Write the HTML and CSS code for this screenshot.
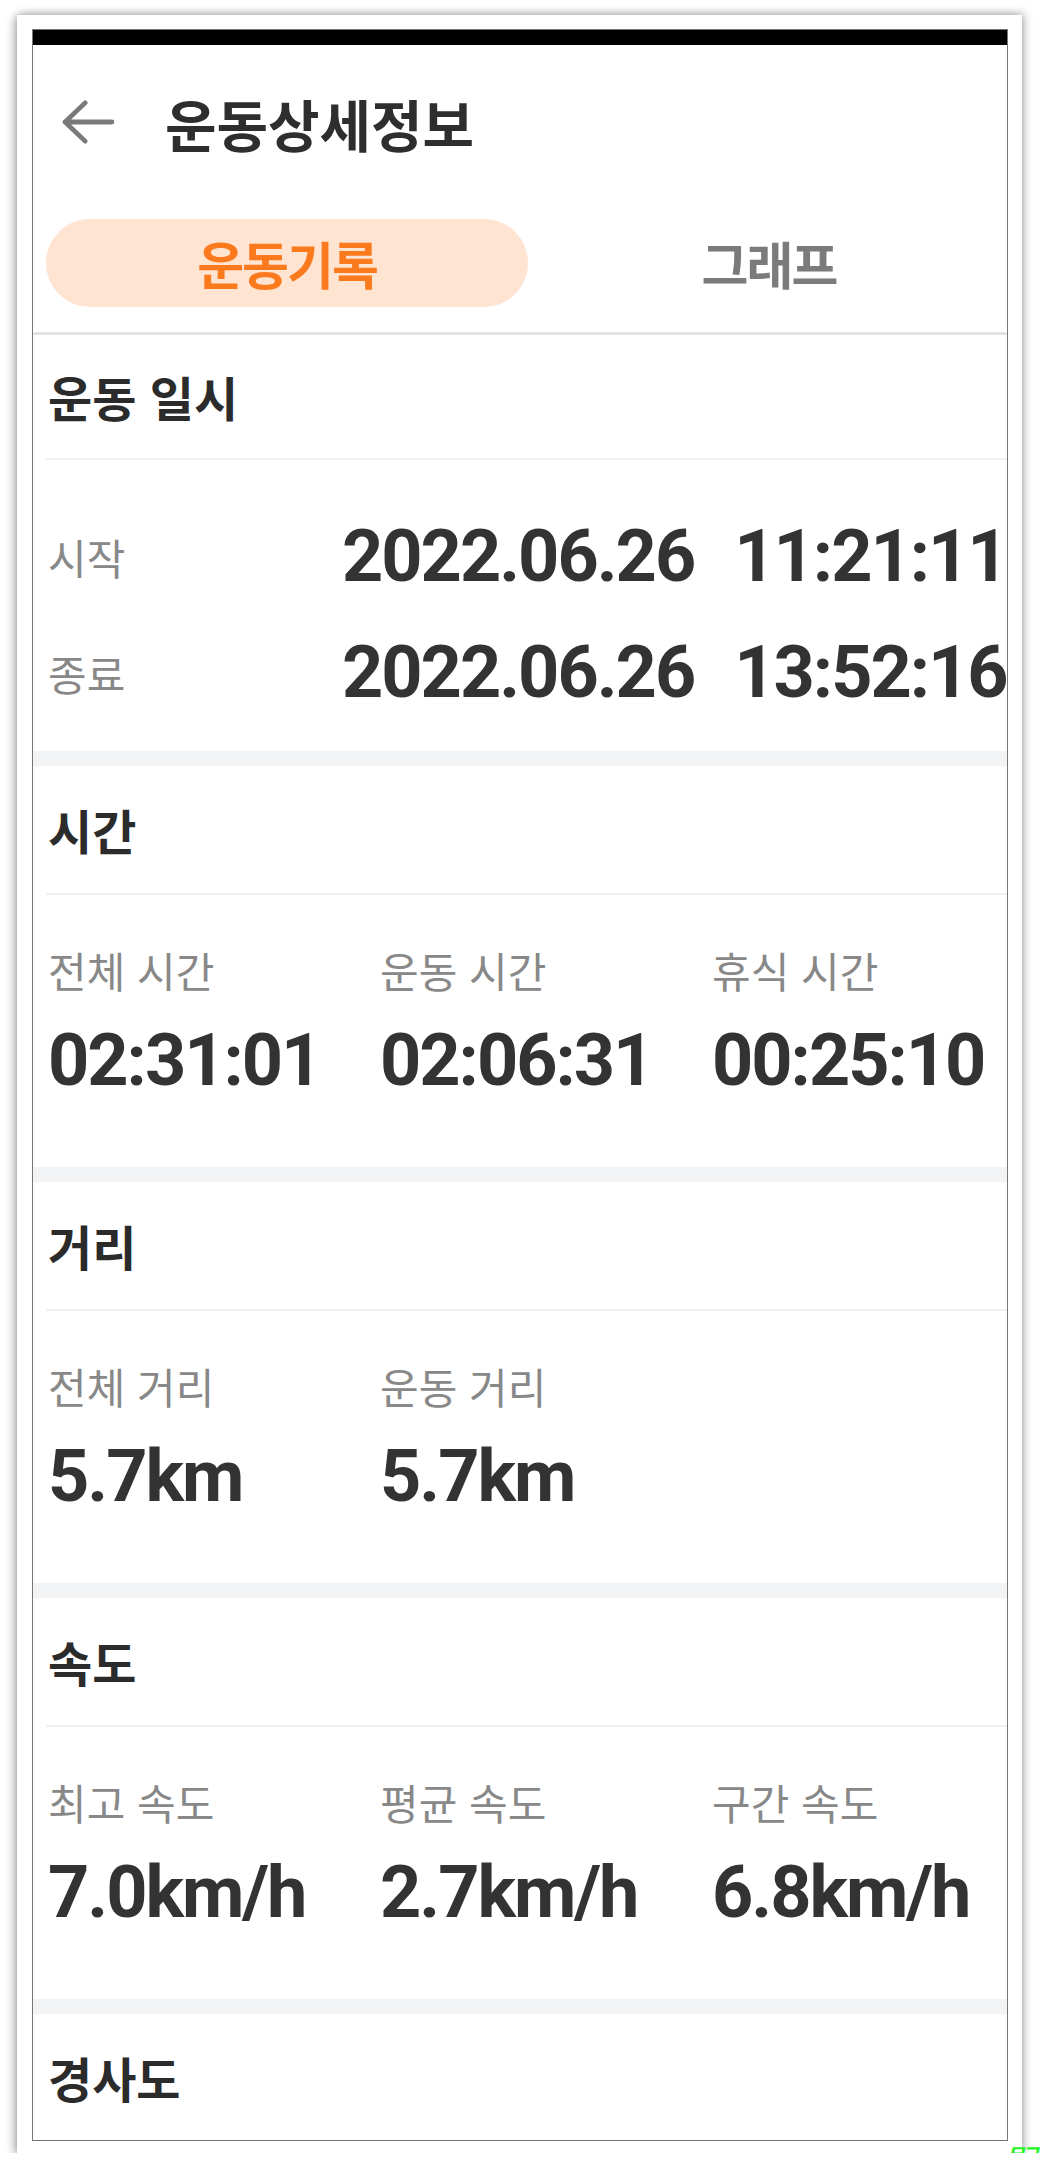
FILE: index.html
```html
<!DOCTYPE html>
<html lang="ko">
  <head>
    <meta charset="utf-8">
    <link rel="stylesheet" href="styles.css">
  </head>
  <body>
    <div class="paper">
      <div class="screen">
        <div class="statusbar"></div>

        <div class="appbar">
          <svg class="back" viewBox="0 0 56 46"><path d="M4 23H53M4 23L25 3M4 23L25 43"/></svg>
          <h1>운동상세정보</h1>
        </div>

        <div class="tabs">
          <div class="tab active">운동기록</div>
          <div class="tab">그래프</div>
        </div>

        <section class="block first">
          <h2>운동 일시</h2>
          <div class="dates">
            <div class="date-row"><span class="label">시작</span><span class="value">2022.06.26</span><span class="value time">11:21:11</span></div>
            <div class="date-row"><span class="label">종료</span><span class="value">2022.06.26</span><span class="value time">13:52:16</span></div>
          </div>
        </section>

        <section class="block">
          <h2>시간</h2>
          <div class="stats">
            <div class="stat"><div class="label">전체 시간</div><div class="value">02:31:01</div></div>
            <div class="stat"><div class="label">운동 시간</div><div class="value">02:06:31</div></div>
            <div class="stat"><div class="label">휴식 시간</div><div class="value">00:25:10</div></div>
          </div>
        </section>

        <section class="block">
          <h2>거리</h2>
          <div class="stats">
            <div class="stat"><div class="label">전체 거리</div><div class="value">5.7km</div></div>
            <div class="stat"><div class="label">운동 거리</div><div class="value">5.7km</div></div>
          </div>
        </section>

        <section class="block">
          <h2>속도</h2>
          <div class="stats">
            <div class="stat"><div class="label">최고 속도</div><div class="value">7.0km/h</div></div>
            <div class="stat"><div class="label">평균 속도</div><div class="value">2.7km/h</div></div>
            <div class="stat"><div class="label">구간 속도</div><div class="value">6.8km/h</div></div>
          </div>
        </section>

        <section class="block">
          <h2>경사도</h2>
        </section>
      </div>
    </div>
    <div class="mark">무구</div>
  </body>
</html>
```

FILE: styles.css
```css
body { margin: 0; background: #fff; position: relative; font-family: "Noto Sans CJK KR", "Noto Sans", sans-serif; }

.paper { box-sizing: border-box; width: 1005px; height: 2138px; margin: 15px 0 0 17px; padding: 14px 0 0 15px; background: #fff;
  box-shadow: 0 0 8px rgba(0,0,0,.3), -4px 3px 10px rgba(0,0,0,.16), 4px -3px 10px rgba(0,0,0,.1); }
.screen { box-sizing: border-box; width: 976px; height: 2112px; border: 1px solid #777; overflow: hidden; background: #fff; }
.statusbar { height: 15px; background: #000; }

.appbar { height: 154px; display: flex; align-items: center; padding-left: 28px; }
.back { width: 54px; height: 44px; fill: none; stroke: #7a7a7a; stroke-width: 5; stroke-linecap: round; stroke-linejoin: round; }
h1 { margin: 0 0 0 50px; font-size: 56px; font-weight: 700; letter-spacing: 0; color: #2e2e2e; }

.tabs { display: grid; grid-template-columns: 482px 482px; padding: 20px 0 25px 13px; border-bottom: 3px solid #e3e3e3; }
.tab { height: 88px; line-height: 88px; text-align: center; border-radius: 44px; font-size: 51px; font-weight: 700; letter-spacing: -2px; color: #7b7b7b; }
.tab.active { background: #ffe4d2; color: #fb7a1e; }

.block + .block { border-top: 15px solid #f2f3f5; }
h2 { margin: 0 0 0 13px; padding-left: 2px; height: 127px; line-height: 127px; border-bottom: 2px solid #eff0f2; font-size: 48px; font-weight: 700; color: #2b2b2b; }
.first h2 { height: 123px; line-height: 123px; }

.label { font-size: 42px; color: #888; }
.value { font-family: Roboto, "Liberation Sans", sans-serif; font-weight: 700; font-size: 72px; letter-spacing: -2px; color: #333; }

.dates { padding: 38px 0 21px 15px; }
.date-row { display: flex; align-items: center; height: 116px; white-space: nowrap; }
.date-row .label { width: 294px; flex: none; }
.date-row .time { margin-left: 40px; }

.stats { display: grid; grid-template-columns: repeat(3, 332px); padding: 50px 0 66px 15px; }
.stat .label { line-height: 50px; white-space: nowrap; }
.stat .value { margin-top: 26px; line-height: 80px; white-space: nowrap; }

.mark { position: absolute; left: 1006px; top: 2144px; white-space: nowrap; font-size: 20px; line-height: 22px; font-weight: 700; font-style: italic; color: #22f522; letter-spacing: -4px; }
```
